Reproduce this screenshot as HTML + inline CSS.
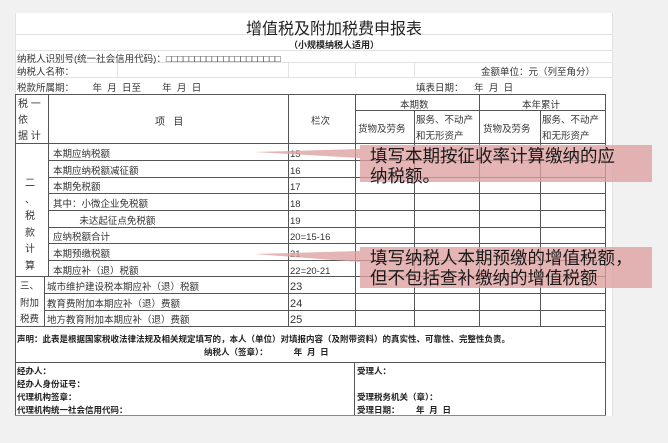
<!DOCTYPE html>
<html><head><meta charset="utf-8"><style>
*{margin:0;padding:0;box-sizing:border-box}
body{width:668px;height:443px;background:#f1f1f1;position:relative;overflow:hidden;font-family:"Liberation Sans","Noto Sans CJK SC",sans-serif;color:#333;font-size:9px}
.a{position:absolute;white-space:nowrap}
.sheet{position:absolute;left:15px;top:13px;width:597px;height:403px;background:#fff}
.h{position:absolute;height:0;border-top:1px solid #555}
.v{position:absolute;width:0;border-left:1px solid #555}
.g{position:absolute;height:0;border-top:1px solid #e2e2e2}
.gv{position:absolute;width:0;border-left:1px solid #e2e2e2}
.call{position:absolute;background:rgba(222,160,160,0.78);color:#1a1a1a;font-size:17.5px;line-height:20px;padding:1px 0 0 10px;font-family:"Liberation Sans","Noto Sans CJK SC",sans-serif}
</style></head><body>
<div class="sheet"></div>
<div class="g" style="left:15px;top:34px;width:597px"></div>
<div class="g" style="left:15px;top:50px;width:597px"></div>
<div class="g" style="left:15px;top:62px;width:597px"></div>
<div class="g" style="left:15px;top:77px;width:597px"></div>
<div class="gv" style="left:15px;top:13px;height:403px"></div>
<div class="gv" style="left:612px;top:13px;height:403px"></div>
<div class="gv" style="left:117px;top:62px;height:15px"></div>
<div class="gv" style="left:288px;top:62px;height:15px"></div>
<div class="gv" style="left:355px;top:62px;height:15px"></div>
<div class="gv" style="left:414px;top:62px;height:15px"></div>

<div class="a" style="left:0;width:668px;text-align:center;top:15px;font-size:16px;color:#222">增值税及附加税费申报表</div>
<div class="a" style="left:0;width:668px;text-align:center;top:38px;font-size:9px;font-weight:bold;color:#222">（小规模纳税人适用）</div>
<div class="a" style="left:17px;top:51px;font-size:9.5px">纳税人识别号(统一社会信用代码)：□□□□□□□□□□□□□□□□□□□□</div>
<div class="a" style="left:17px;top:64px;font-size:9.5px">纳税人名称：</div>
<div class="a" style="left:481px;top:64px;font-size:9.5px">金额单位：元（列至角分）</div>
<div class="a" style="left:17px;top:80px;font-size:9.5px">税款所属期：&nbsp;&nbsp;&nbsp;&nbsp;&nbsp;&nbsp;&nbsp;年&nbsp;&nbsp;月&nbsp;&nbsp;日至&nbsp;&nbsp;&nbsp;&nbsp;&nbsp;&nbsp;&nbsp;&nbsp;年&nbsp;&nbsp;月&nbsp;&nbsp;日</div>
<div class="a" style="left:416px;top:80px;font-size:9.5px">填表日期：&nbsp;&nbsp;&nbsp;&nbsp;年&nbsp;&nbsp;月&nbsp;&nbsp;日</div>

<div class="h" style="left:15px;top:94px;width:591px"></div>
<div class="h" style="left:355px;top:110px;width:251px"></div>
<div class="h" style="left:15px;top:143px;width:591px"></div>
<div class="h" style="left:48px;top:160px;width:558px"></div>
<div class="h" style="left:48px;top:177px;width:558px"></div>
<div class="h" style="left:48px;top:193px;width:558px"></div>
<div class="h" style="left:48px;top:210px;width:558px"></div>
<div class="h" style="left:48px;top:227px;width:558px"></div>
<div class="h" style="left:48px;top:243px;width:558px"></div>
<div class="h" style="left:48px;top:260px;width:558px"></div>
<div class="h" style="left:15px;top:276px;width:591px"></div>
<div class="h" style="left:44px;top:293px;width:562px"></div>
<div class="h" style="left:44px;top:310px;width:562px"></div>
<div class="h" style="left:15px;top:326px;width:591px"></div>
<div class="h" style="left:15px;top:362px;width:591px"></div>
<div class="h" style="left:15px;top:415px;width:591px;border-top-color:#888"></div>
<div class="v" style="left:15px;top:94px;height:321px"></div>
<div class="v" style="left:48px;top:94px;height:182px"></div>
<div class="v" style="left:44px;top:276px;height:50px"></div>
<div class="v" style="left:288px;top:94px;height:232px"></div>
<div class="v" style="left:355px;top:94px;height:232px"></div>
<div class="v" style="left:414px;top:110px;height:216px"></div>
<div class="v" style="left:479px;top:94px;height:232px"></div>
<div class="v" style="left:540px;top:110px;height:216px"></div>
<div class="v" style="left:605px;top:94px;height:321px"></div>
<div class="v" style="left:354px;top:362px;height:53px"></div>

<div class="a" style="left:18px;top:97px;font-size:10px;line-height:16px">税 一<br>依<br>据 计</div>
<div class="a" style="left:155px;top:113px;font-size:10px">项&nbsp;&nbsp;&nbsp;目</div>
<div class="a" style="left:311px;top:113px;font-size:9.5px">栏次</div>
<div class="a" style="left:400px;top:97px;font-size:9.5px">本期数</div>
<div class="a" style="left:522px;top:97px;font-size:9.5px">本年累计</div>
<div class="a" style="left:358px;top:121px;font-size:9.5px">货物及劳务</div>
<div class="a" style="left:416px;top:113px;font-size:9.5px;line-height:16px">服务、不动产<br>和无形资产</div>
<div class="a" style="left:483px;top:121px;font-size:9.5px">货物及劳务</div>
<div class="a" style="left:542px;top:113px;font-size:9.5px;line-height:16px">服务、不动产<br>和无形资产</div>

<div class="a" style="left:25px;top:176px;font-size:10px;line-height:16.6px;text-align:center">二<br>、<br>税<br>款<br>计<br>算</div>
<div class="a" style="left:20px;top:279px;font-size:9.5px;line-height:16.6px">三、<br>附加<br>税费</div>

<div class="a" style="left:53px;top:147px;line-height:16.65px;font-size:9.5px">本期应纳税额<br>本期应纳税额减征额<br>本期免税额<br>其中：小微企业免税额<br>&nbsp;&nbsp;&nbsp;&nbsp;&nbsp;&nbsp;&nbsp;&nbsp;&nbsp;&nbsp;未达起征点免税额<br>应纳税额合计<br>本期预缴税额<br>本期应补（退）税额</div>
<div class="a" style="left:47px;top:280px;line-height:16.65px;font-size:9.5px">城市维护建设税本期应补（退）税额<br>教育费附加本期应补（退）费额<br>地方教育附加本期应补（退）费额</div>
<div class="a" style="left:290px;top:147px;line-height:16.65px;font-size:9.5px">15<br>16<br>17<br>18<br>19<br>20=15-16<br>21<br>22=20-21</div>
<div class="a" style="left:290px;top:279px;line-height:16.65px;font-size:11px">23<br>24<br>25</div>

<div class="a" style="left:17px;top:333px;font-size:8.5px;font-weight:bold;color:#222">声明：此表是根据国家税收法律法规及相关规定填写的，本人（单位）对填报内容（及附带资料）的真实性、可靠性、完整性负责。</div>
<div class="a" style="left:204px;top:346px;font-size:8.5px;font-weight:bold;color:#222">纳税人（签章）：&nbsp;&nbsp;&nbsp;&nbsp;&nbsp;&nbsp;&nbsp;&nbsp;&nbsp;&nbsp;&nbsp;年&nbsp;&nbsp;月&nbsp;&nbsp;日</div>
<div class="a" style="left:17px;top:365px;font-size:8.5px;font-weight:bold;line-height:13px;color:#222">经办人：<br>经办人身份证号：<br>代理机构签章：<br>代理机构统一社会信用代码：</div>
<div class="a" style="left:357px;top:365px;font-size:8.5px;font-weight:bold;line-height:13px;color:#222">受理人：<br><br>受理税务机关（章）：<br>受理日期：&nbsp;&nbsp;&nbsp;&nbsp;&nbsp;&nbsp;&nbsp;年&nbsp;&nbsp;月&nbsp;&nbsp;日</div>

<svg class="a" style="left:0;top:0" width="668" height="443"><polygon points="254,152 360,149 360,158" fill="rgba(222,160,160,0.78)"/><polygon points="254,254 360,251 360,262" fill="rgba(222,160,160,0.78)"/></svg>
<div class="call" style="left:360px;top:145px;width:292px;height:37px">填写本期按征收率计算缴纳的应<br>纳税额。</div>
<div class="call" style="left:360px;top:247px;width:292px;height:41px">填写纳税人本期预缴的增值税额，<br>但不包括查补缴纳的增值税额</div>
</body></html>
